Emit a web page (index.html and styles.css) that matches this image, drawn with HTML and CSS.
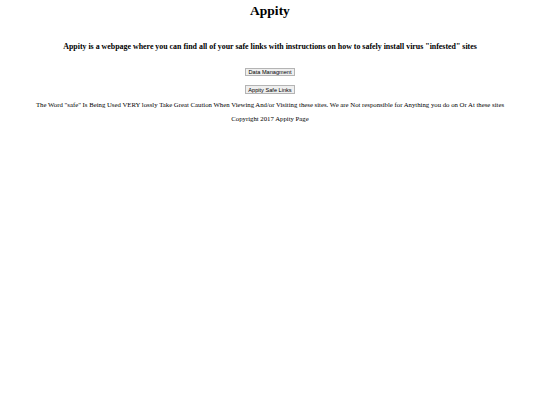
FILE: index.html
```html
<!DOCTYPE html>
<html>
<head>
<meta charset="utf-8">
<title>Appity</title>
<link rel="stylesheet" href="styles.css">
</head>
<body>
<h1 class="title">Appity</h1>
<h3 class="intro">Appity is a webpage where you can find all of your safe links with instructions on how to safely install virus "infested" sites</h3>
<p class="action"><button class="btn">Data Managment</button></p>
<p class="action"><button class="btn">Appity Safe Links</button></p>
<p class="note">The Word "safe" Is Being Used VERY lossly Take Great Caution When Viewing And/or Visiting these sites. We are Not responsible for Anything you do on Or At these sites</p>
<p class="note">Copyright 2017 Appity Page</p>
</body>
</html>
```
FILE: styles.css
```css
html {
  background: #fff;
}
body {
  margin: 3.375px;
  font-family: "Liberation Serif", "Times New Roman", serif;
  color: #000;
  text-align: center;
}
.title {
  font-size: 13.5px;
  margin: 0 0 22.8px;
}
.intro {
  font-size: 7.9px;
  margin: 0 0 16.45px;
}
.action {
  margin: 6.75px 0;
  font-size: 6.75px;
}
.action + .action {
  margin-top: 8.86px;
}
.btn {
  font-family: "Liberation Sans", Arial, sans-serif;
  font-size: 5.625px;
  padding: 0.4px 2.5px;
  border: 1px solid #b4b4b4;
  background: #efefef;
  color: #000;
}
.note {
  font-size: 6.75px;
  margin: 6.75px 0;
}
```
